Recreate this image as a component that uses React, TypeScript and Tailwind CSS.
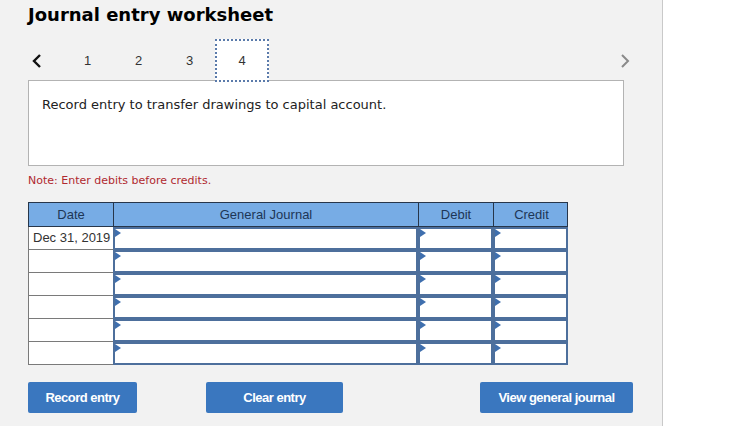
import React from 'react';

const rows = ['Dec 31, 2019', '', '', '', '', ''];

// 小三角 —— 输入框左上角的标记
const Marker = () => (
  <span className="absolute left-0 top-0 h-0 w-0 border-y-[4px] border-l-[6px] border-y-transparent border-l-[#3f6fae]" />
);

const InputCell = () => (
  <div className="relative h-[23px] border-2 border-[#4d6f9c] bg-white">
    <Marker />
  </div>
);

export default function App() {
  return (
    <div className="flex h-[426px] w-[738px] bg-white font-['DejaVu_Sans',Verdana,sans-serif]">
      <div className="w-[663px] shrink-0 border-r border-[#c9c9c9] bg-[#f2f2f2] pl-[28px]">
        <h1 className="pt-[4px] text-[18px] font-bold leading-[22px] text-black">Journal entry worksheet</h1>

        {/* tabs */}
        <div className="mt-[13px] flex h-[43px] items-center pr-[31px] font-['Liberation_Sans',Arial,sans-serif] text-[13px] text-[#333]">
          <svg width="12" height="16" viewBox="0 0 12 16" className="ml-[3px]">
            <path d="M9 2 L3 8 L9 14" fill="none" stroke="#111" strokeWidth="2.4" />
          </svg>
          <div className="ml-[19px] flex">
            <div className="flex w-[51px] items-center justify-center">1</div>
            <div className="flex w-[51px] items-center justify-center">2</div>
            <div className="flex w-[51px] items-center justify-center">3</div>
            <div className="relative z-10 flex h-[43px] w-[54px] items-center justify-center border-2 border-dotted border-[#5b7bab] bg-white">4</div>
          </div>
          <svg width="12" height="16" viewBox="0 0 12 16" className="ml-auto">
            <path d="M3 2 L9 8 L3 14" fill="none" stroke="#8a8a8a" strokeWidth="2" />
          </svg>
        </div>

        <div className="-mt-[2px] h-[86px] w-[596px] border border-[#b3b3b3] bg-white px-[13px] pt-[14px] text-[13px] text-[#222]">
          Record entry to transfer drawings to capital account.
        </div>

        <p className="mt-[8px] text-[11px] leading-[14px] text-[#b0292f]">Note: Enter debits before credits.</p>

        {/* journal table */}
        <div className="mt-[14px] w-[540px] font-['Liberation_Sans',Arial,sans-serif] text-[13px]">
          <div className="grid h-[25px] grid-cols-[85px_305px_75px_75px] border border-[#27364a] bg-[#77ace5] text-[#1d3656]">
            <div className="flex items-center justify-center border-r border-[#27364a]">Date</div>
            <div className="flex items-center justify-center border-r border-[#27364a]">General Journal</div>
            <div className="flex items-center justify-center border-r border-[#27364a]">Debit</div>
            <div className="flex items-center justify-center">Credit</div>
          </div>
          {rows.map((d, i) => (
            <div key={i} className="grid grid-cols-[85px_305px_75px_75px]">
              <div className="flex h-[23px] items-center border-b border-l border-[#7a7a7a] bg-white pl-[4px] text-[#333]">
                {d}
              </div>
              <InputCell />
              <InputCell />
              <InputCell />
            </div>
          ))}
        </div>

        {/* buttons */}
        <div className="mt-[17px] flex w-[605px] font-['Liberation_Sans',Arial,sans-serif] text-[13px] font-bold tracking-[-0.5px] text-white">
          <button className="h-[31px] w-[109px] rounded-[2px] bg-[#3a77bf]">Record entry</button>
          <button className="ml-[69px] h-[31px] w-[137px] rounded-[2px] bg-[#3a77bf]">Clear entry</button>
          <button className="ml-auto h-[31px] w-[153px] rounded-[2px] bg-[#3a77bf]">View general journal</button>
        </div>
      </div>
      <div className="flex-1" />
    </div>
  );
}
